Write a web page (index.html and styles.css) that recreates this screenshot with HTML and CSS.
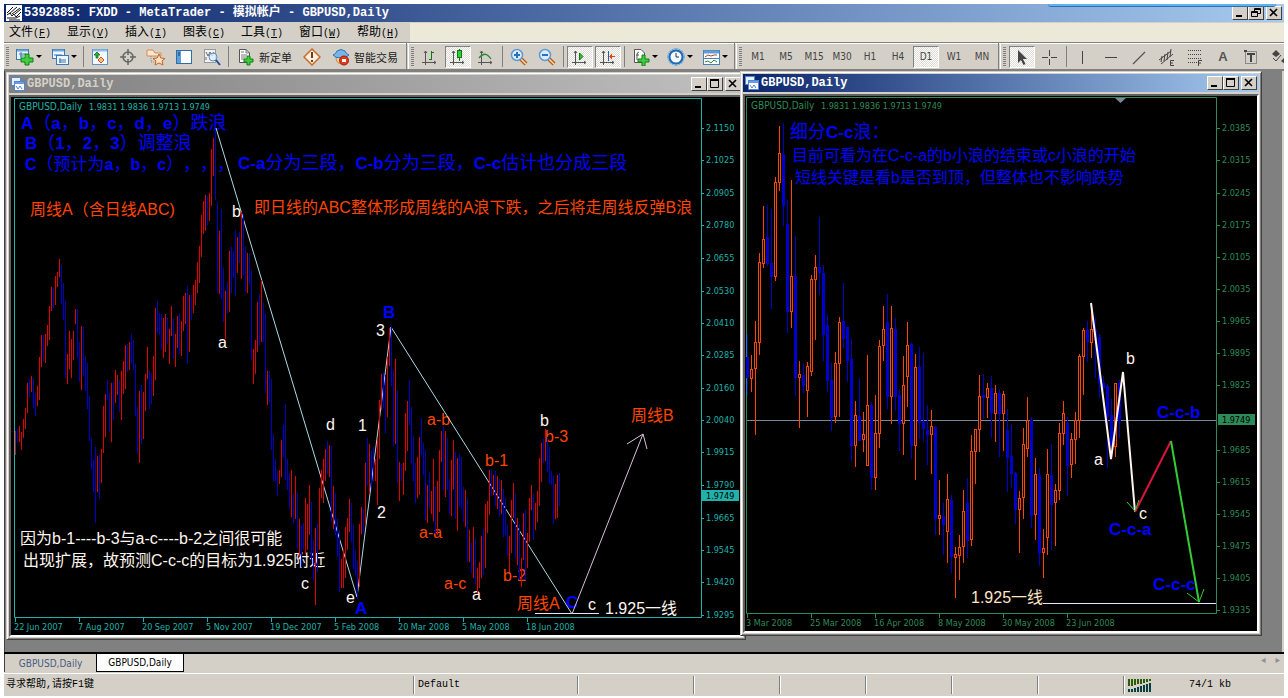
FILE: index.html
```html
<!DOCTYPE html>
<html lang="zh-CN">
  <head>
    <meta charset="UTF-8" />
    <meta name="viewport" content="width=device-width, initial-scale=1.0" />
    <title>5392885: FXDD - MetaTrader - GBPUSD,Daily</title>
    <link rel="stylesheet" href="styles.css">
  </head>

  <body>
    <div class="app">
      <header class="titlebar main-title">
        <svg class="logo" width="16" height="16" viewBox="0 0 16 16"><rect width="16" height="16" fill="#fff"/><path d="M1 8L7 2M3 9L11 2M6 9L14 3M9 9L15 4M1 10L4 8L6 11L8 9L10 12L15 7M1 13H10L14 11M3 15H14" stroke="#111" stroke-width="1" fill="none"/></svg>
        <h1>5392885: FXDD - MetaTrader - 模拟帐户 - GBPUSD,Daily</h1>
        <div class="dock"></div>
        <div class="win-buttons">
          <button aria-label="最小化"><svg width="12" height="10"><path d="M2 8H8" stroke="#000" stroke-width="2"/></svg></button>
          <button aria-label="还原"><svg width="12" height="10"><path d="M4.500 3V.5H10.500V5.500H8M4 1.500H11M1.500 3.500H7.500V8.500H1.500ZM1 4.500H8" stroke="#000" fill="none"/></svg></button>
          <button class="close" aria-label="关闭"><svg width="12" height="10"><path d="M2 1L9 8M9 1L2 8" stroke="#000" stroke-width="1.6"/></svg></button>
        </div>
      </header>

      <nav class="menubar">
        <div class="menus">
          <button>文件<span>(<u>F</u>)</span></button>
          <button>显示<span>(<u>V</u>)</span></button>
          <button>插入<span>(<u>I</u>)</span></button>
          <button>图表<span>(<u>C</u>)</span></button>
          <button>工具<span>(<u>T</u>)</span></button>
          <button>窗口<span>(<u>W</u>)</span></button>
          <button>帮助<span>(<u>H</u>)</span></button>
        </div>
      </nav>

      <div class="toolbar">
        <div class="group">
          <i class="grip"></i>
          <button class="drop" aria-label="新图表"><svg width="18" height="18"><rect x=".5" y="1.500" width="12" height="10" fill="#eef5fc" stroke="#3b78b5"/><path d="M1 2.500H12" stroke="#6ea5dc" stroke-width="2"/><path d="M3 6H10M4 8H8M5 4V10" stroke="#3b78b5"/><path d="M9 6H13V10H17V14H13V17H9V14H5V10H9Z" fill="#3fce3f" stroke="#108010"/></svg></button>
          <button class="drop" aria-label="配置文件"><svg width="18" height="18"><rect x="1.500" y="1.500" width="12" height="9" fill="#eef5fc" stroke="#3b78b5"/><path d="M2 2.500H13" stroke="#6ea5dc" stroke-width="2"/><rect x="5.500" y="7.500" width="12" height="9" fill="#eef5fc" stroke="#3b78b5"/><path d="M3 7H11M8 12H15M8 14H15M9 10V15" stroke="#3b78b5"/></svg></button>
          <i class="sep"></i>
          <button aria-label="市场报价"><svg width="18" height="18"><rect x="1.500" y="1.500" width="15" height="15" fill="#f4f9ff" stroke="#5a96cc"/><path d="M2 2.500H16" stroke="#8fbfec" stroke-width="2"/><path d="M3 7L6 4L9 7H7V10H5V7Z" fill="#2fae2f" stroke="#157015" stroke-width=".8"/><path d="M7 12L10 9L13 12L10 15Z" fill="#f6c08c" stroke="#d05010"/></svg></button>
          <button aria-label="数据窗口"><svg width="18" height="18"><circle cx="9" cy="9" r="5" fill="none" stroke="#666" stroke-width="1.600"/><path d="M9 1V7M9 11V17M1 9H7M11 9H17" stroke="#666" stroke-width="1.500"/></svg></button>
          <button aria-label="导航器"><svg width="20" height="18"><path d="M1 2H7L9 5H15V8H1Z" fill="#fbe5cf" stroke="#d48b5a"/><path d="M5 8V14H8" stroke="#888" stroke-dasharray="1 1" fill="none"/><path d="M13 6L14.800 10L19 10.500L16 13L17 17L13 15L9 17L10 13L7 10.500L11.200 10Z" fill="#fce3c2" stroke="#c96224"/></svg></button>
          <button aria-label="终端"><svg width="18" height="18"><rect x="1.500" y="2.500" width="15" height="13" fill="#fff" stroke="#2e6da6"/><rect x="2" y="3" width="4" height="12" fill="#5f9ed6"/><path d="M4 4V8" stroke="#113a66"/></svg></button>
          <button aria-label="策略测试"><svg width="18" height="18"><rect x="1.500" y="1.500" width="11" height="13" fill="#f2f2f2" stroke="#999"/><path d="M3 4L5 8L7 4L9 8L11 4M3 9V12" stroke="#667" fill="none"/><circle cx="10" cy="9" r="4" fill="#dbeefb" fill-opacity=".8" stroke="#5a8fc0"/><path d="M13 12L17 17" stroke="#1c4fa0" stroke-width="2"/></svg></button>
          <i class="sep"></i>
          <button class="wide"><svg width="18" height="18"><path d="M2.500 1.500H9L12.500 5V14.500H2.500Z" fill="#fff" stroke="#555"/><path d="M9 1V5H13M4 7H10M4 9H9M4 11H8M4 4H7" stroke="#777" fill="none"/><path d="M10 8H13V11H16V14H13V17H10V14H7V11H10Z" fill="#3fce3f" stroke="#108010"/></svg>新定单</button>
          <button aria-label="MetaEditor"><svg width="18" height="18"><path d="M9 1L17 9L9 17L1 9Z" fill="#fdeee0" stroke="#c56a2b" stroke-width="1.500"/><path d="M9 4V10M9 12V14" stroke="#7a3c12" stroke-width="2"/></svg></button>
          <button class="wide"><svg width="18" height="18"><path d="M4 9Q4 16 10 16L14 9Z" fill="#f5d4a0" stroke="#c9873c"/><path d="M1 7Q4 6 5 3Q9 0 13 3Q14 6 17 7Q15 10 9 10Q3 10 1 7Z" fill="#75b5ea" stroke="#3274b0"/><circle cx="12" cy="12.500" r="4.500" fill="#e23b1e" stroke="#a01c08"/><rect x="10" y="11" width="4" height="3" fill="#fff"/></svg>智能交易</button>
        </div>
        <div class="group">
          <i class="grip"></i>
          <button aria-label="柱状图"><svg width="18" height="18"><path d="M4.500 3V17M1 14.500H15M3 5L4.500 3L6 5M13 13L15 14.500L13 16" stroke="#555" fill="none"/><path d="M10.500 3V12M8 11.500H10.500M10.500 4.500H13" stroke="#0d7a12"/></svg></button>
          <button class="pressed" aria-label="阴阳烛"><svg width="18" height="18"><path d="M4.500 3V17M1 14.500H15M3 5L4.500 3L6 5M13 13L15 14.500L13 16" stroke="#555" fill="none"/><path d="M10.500 1V13" stroke="#0d7a12"/><rect x="8.500" y="2.500" width="4" height="7" fill="#30d030" stroke="#0d7a12"/></svg></button>
          <button aria-label="折线图"><svg width="18" height="18"><path d="M4.500 3V17M1 14.500H15M3 5L4.500 3L6 5M13 13L15 14.500L13 16" stroke="#555" fill="none"/><path d="M2 10Q8 2 14 11" stroke="#2c8a35" fill="none" stroke-width="1.300"/></svg></button>
          <i class="sep"></i>
          <button aria-label="放大"><svg width="18" height="18"><path d="M11 11L16 16" stroke="#b35a20" stroke-width="4"/><path d="M11 11L16 16" stroke="#ffd9a8" stroke-width="1.500"/><circle cx="7" cy="7" r="5.500" fill="#d9ecfb" stroke="#5f9ad6" stroke-width="1.500"/><path d="M4 7H10M7 4V10" stroke="#2f6fb4" stroke-width="2"/></svg></button>
          <button aria-label="缩小"><svg width="18" height="18"><path d="M11 11L16 16" stroke="#b35a20" stroke-width="4"/><path d="M11 11L16 16" stroke="#ffd9a8" stroke-width="1.500"/><circle cx="7" cy="7" r="5.500" fill="#d9ecfb" stroke="#5f9ad6" stroke-width="1.500"/><path d="M4 7H10" stroke="#2f6fb4" stroke-width="2"/></svg></button>
          <i class="sep"></i>
          <button class="pressed" aria-label="自动滚动"><svg width="18" height="18"><path d="M4.500 3V17M1 14.500H15M3 5L4.500 3L6 5M13 13L15 14.500L13 16" stroke="#555" fill="none"/><path d="M8.500 5L12 8.500L8.500 12Z" fill="#30c030" stroke="#0d7a12"/></svg></button>
          <button class="pressed" aria-label="图表平移"><svg width="18" height="18"><path d="M4.500 3V17M1 14.500H15M3 5L4.500 3L6 5M13 13L15 14.500L13 16" stroke="#555" fill="none"/><path d="M9.500 3V13" stroke="#2b5f93"/><path d="M10 8.500L13 5.500V8H16V9H13V11.500Z" fill="#d6451b"/></svg></button>
          <i class="sep"></i>
          <button class="drop" aria-label="技术指标"><svg width="18" height="18"><path d="M2.500 1.500H9L12.500 5V14.500H2.500Z" fill="#fff" stroke="#555"/><path d="M7 4Q5 4 5 7V12M4 7H7" stroke="#555" fill="none"/><path d="M10 7H13V11H17V14H13V18H10V14H6V11H10Z" fill="#3fce3f" stroke="#108010"/></svg></button>
          <button class="drop" aria-label="周期"><svg width="18" height="18"><circle cx="9" cy="9" r="7" fill="#f4f8fc" stroke="#2269b3" stroke-width="3"/><circle cx="9" cy="9" r="8" fill="none" stroke="#8bc4f0"/><path d="M9 5V9H12" stroke="#333" fill="none"/></svg></button>
          <button class="drop" aria-label="模板"><svg width="18" height="18"><rect x="1.500" y="2.500" width="16" height="14" fill="#fff" stroke="#4583bd"/><path d="M2 4H17" stroke="#5f9ed6" stroke-width="3"/><path d="M3 9L6 7L9 8L12 7L15 7" stroke="#a8482a" fill="none"/><path d="M2 10.500H17" stroke="#4583bd"/><path d="M3 14L6 13L9 15L12 12L15 14" stroke="#2d8a38" fill="none"/></svg></button>
        </div>
        <div class="group periods">
          <i class="grip"></i>
          <button>M1</button>
          <button>M5</button>
          <button>M15</button>
          <button>M30</button>
          <button>H1</button>
          <button>H4</button>
          <button class="pressed">D1</button>
          <button>W1</button>
          <button>MN</button>
        </div>
        <div class="group tools">
          <i class="grip"></i>
          <button class="pressed" aria-label="光标"><svg width="18" height="18"><path d="M5 2V15L8 12L10.500 17L12.500 16L10 11H14Z" fill="#444"/></svg></button>
          <button aria-label="十字准线"><svg width="18" height="18"><path d="M8.500 2V8M8.500 11V17M1 9.500H7M10 9.500H16" stroke="#444"/></svg></button>
          <i class="sep"></i>
          <button aria-label="垂直线"><svg width="18" height="18"><path d="M8.500 3V16" stroke="#444"/></svg></button>
          <button aria-label="水平线"><svg width="18" height="18"><path d="M3 9.500H15" stroke="#444"/></svg></button>
          <button aria-label="趋势线"><svg width="18" height="18"><path d="M3 16L15 4" stroke="#555" stroke-width="1.300"/></svg></button>
          <button aria-label="等距通道"><svg width="18" height="18"><path d="M1 12L13 3M3 16L15 6M4 8L3 14M7 6L6 13M10 4L9 12M13 1L12 9" stroke="#444"/><path d="M16 12.500H12.500V17.500H16M12.500 15H15" stroke="#444" fill="none"/></svg></button>
          <button aria-label="斐波纳契回调"><svg width="18" height="18"><path d="M2 2.500H16M2 6.500H16M2 10.500H16M2 14.500H11" stroke="#444" stroke-dasharray="1 1"/><path d="M16 12.500H12.500V18M12.500 15H15" stroke="#444" fill="none"/></svg></button>
          <button class="letter">A</button>
          <button aria-label="文字标签"><svg width="18" height="18"><rect x="3.500" y="3.500" width="11" height="12" fill="none" stroke="#444" stroke-dasharray="1 1"/><path d="M5 6H13M9 6V14" stroke="#444" stroke-width="2"/><rect x="2" y="2" width="3" height="2" fill="#444"/></svg></button>
          <button aria-label="箭头"><svg width="18" height="18"><path d="M2 6L6 2L10 6L6 9ZM11 13L15 9L18 12V15L15 16Z" fill="#444"/><path d="M3 10L6 13L11 7" stroke="#444" fill="none"/></svg></button>
        </div>
      </div>

      <main class="desktop">
        <section class="window win-left">
          <div class="titlebar inactive">
            <svg width="14" height="14"><rect x=".5" y=".5" width="9" height="8" fill="#e8f1fb" stroke="#4f86d8"/><rect x="3.500" y="4.500" width="10" height="9" fill="#fff" stroke="#4f86d8"/><path d="M4 6H13" stroke="#6b9be8" stroke-width="2"/><path d="M5 9L7 12L9 9L11 12" stroke="#4f86d8" fill="none"/></svg>
            <h2>GBPUSD,Daily</h2>
            <div class="win-buttons">
              <button aria-label="最小化"><svg width="12" height="10"><path d="M2 8H8" stroke="#000" stroke-width="2"/></svg></button>
              <button aria-label="最大化"><svg width="12" height="10"><path d="M1.500 1V8.500H9.500V1" stroke="#000" fill="none"/><path d="M1 1H10" stroke="#000" stroke-width="2"/></svg></button>
              <button class="close" aria-label="关闭"><svg width="12" height="10"><path d="M2 1L9 8M9 1L2 8" stroke="#000" stroke-width="1.6"/></svg></button>
            </div>
          </div>
          <svg class="chart weekly" id="chartLeft" viewBox="11 97 730 538">
            <path class="frame" d="M14.500 617.500V98.500H701.500V617.500Z"/>
            <text class="axis symbol" x="19" y="110">GBPUSD,Daily</text>
            <text class="axis" x="89" y="110">1.9831 1.9836 1.9713 1.9749</text>

            <g class="note blue big">
              <text x="21" y="129"><tspan>A</tspan>（<tspan>a</tspan>，<tspan>b</tspan>，<tspan>c</tspan>，<tspan>d</tspan>，<tspan>e</tspan>）跌浪</text>
              <text x="25" y="149"><tspan>B</tspan>（<tspan>1</tspan>，<tspan>2</tspan>，<tspan>3</tspan>）调整浪</text>
              <text class="narrow" x="25" y="170"><tspan>C</tspan>（预计为<tspan>a</tspan>，<tspan>b</tspan>，<tspan>c</tspan>），，，</text>
              <text x="238" y="169"><tspan>C-a</tspan>分为三段，<tspan>C-b</tspan>分为三段，<tspan>C-c</tspan>估计也分成三段</text>
              <text x="355" y="614"><tspan>A</tspan></text>
              <text x="383" y="318"><tspan>B</tspan></text>
              <text x="566" y="608"><tspan>C</tspan></text>
            </g>
            <g class="note orange">
              <text x="30" y="215">周线A（含日线ABC)</text>
              <text x="254" y="213">即日线的ABC整体形成周线的A浪下跌，之后将走周线反弹B浪</text>
              <text x="427" y="425">a-b</text>
              <text x="419" y="538">a-a</text>
              <text x="444" y="589">a-c</text>
              <text x="485" y="466">b-1</text>
              <text x="545" y="442">b-3</text>
              <text x="503" y="581">b-2</text>
              <text x="517" y="609">周线A</text>
              <text x="631" y="421">周线B</text>
            </g>
            <g class="note white">
              <text x="20" y="544">因为b-1----b-3与a-c----b-2之间很可能</text>
              <text x="23" y="566">出现扩展，故预测C-c-c的目标为1.925附近</text>
              <text x="232" y="217">b</text>
              <text x="218" y="348">a</text>
              <text x="326" y="430">d</text>
              <text x="301" y="589">c</text>
              <text x="346" y="603">e</text>
              <text x="358" y="431">1</text>
              <text x="376" y="336">3</text>
              <text x="377" y="518">2</text>
              <text x="472" y="600">a</text>
              <text x="540" y="426">b</text>
              <text x="588" y="610">c</text>
              <text x="605" y="614">1.925一线</text>
            </g>

            <path class="wave" d="M216 128L357 597L391 327L572 614"/>
            <path class="level" d="M535 613.500H599"/>
            <path class="forecast" d="M572 614L643 434M627 444L643 434L647 449"/>
            <g class="bars"></g>
            <g class="scale"></g>
          </svg>
        </section>

        <section class="window win-right">
          <div class="titlebar">
            <svg width="14" height="14"><rect x=".5" y=".5" width="9" height="8" fill="#e8f1fb" stroke="#4f86d8"/><rect x="3.500" y="4.500" width="10" height="9" fill="#fff" stroke="#4f86d8"/><path d="M4 6H13" stroke="#6b9be8" stroke-width="2"/><path d="M5 9L7 12L9 9L11 12" stroke="#4f86d8" fill="none"/></svg>
            <h2>GBPUSD,Daily</h2>
            <div class="win-buttons">
              <button aria-label="最小化"><svg width="12" height="10"><path d="M2 8H8" stroke="#000" stroke-width="2"/></svg></button>
              <button aria-label="最大化"><svg width="12" height="10"><path d="M1.500 1V8.500H9.500V1" stroke="#000" fill="none"/><path d="M1 1H10" stroke="#000" stroke-width="2"/></svg></button>
              <button class="close" aria-label="关闭"><svg width="12" height="10"><path d="M2 1L9 8M9 1L2 8" stroke="#000" stroke-width="1.6"/></svg></button>
            </div>
          </div>
          <svg class="chart daily" id="chartRight" viewBox="745 96 512 535">
            <path class="frame" d="M746.500 613.500V97.500H1216.500V613.500Z"/>
            <path d="M1115 98H1126L1120.500 103Z" fill="#778899"/>
            <text class="axis symbol" x="751" y="109">GBPUSD,Daily</text>
            <text class="axis" x="821" y="109">1.9831 1.9836 1.9713 1.9749</text>
            <path class="price" d="M747 420.500H1216"/>
            <path class="level" d="M1043 603.500H1216"/>
            <g class="bars"></g>

            <g class="note blue big">
              <text x="790" y="138">细分<tspan>C-c</tspan>浪：</text>
              <text x="1157" y="418"><tspan>C-c-b</tspan></text>
              <text x="1109" y="535"><tspan>C-c-a</tspan></text>
              <text x="1153" y="590"><tspan>C-c-c</tspan></text>
            </g>
            <g class="note blue">
              <text x="792" y="161">目前可看为在C-c-a的b小浪的结束或c小浪的开始</text>
              <text x="795" y="183">短线关键是看b是否到顶，但整体也不影响跌势</text>
            </g>
            <g class="note white">
              <text x="1126" y="364">b</text>
              <text x="1094" y="465">a</text>
              <text x="1139" y="519">c</text>
              <text class="bisque" x="971" y="603">1.925一线</text>
            </g>

            <g class="swing">
              <path stroke="#fff5ee" d="M1091 303L1111 459L1123 372L1135 512"/>
              <path stroke="#dc143c" d="M1135 512L1171 441"/>
              <path stroke="#32cd32" d="M1171 441L1199 602"/>
              <path class="head" d="M1127 502L1135 511L1139 500M1187 593L1199 602L1204 589"/>
            </g>
            <g class="scale"></g>
          </svg>
        </section>
      </main>

      <div class="tabs">
        <button>GBPUSD,Daily</button>
        <button class="active">GBPUSD,Daily</button>
        <span class="arrows"><i>◂</i><i>▸</i></span>
      </div>

      <footer class="status">
        <span class="help">寻求帮助,请按F1键</span>
        <span class="profile">Default</span>
        <span class="bar-time"></span>
        <span></span>
        <span></span>
        <span></span>
        <span></span>
        <span></span>
        <span class="traffic">
          <svg width="24" height="13"><path d="M1 0V7M4 0V7M7 0V6M10 0V5M13 0V5M16 0V4M19 0V3M22 0V2" stroke="#2a5c00" stroke-width="2"/><path d="M1 10V13M4 10V13M7 9V13M10 8V13M13 7V13M16 6V13M19 5V13M22 4V13" stroke="#004040" stroke-width="2"/></svg>
          74/1 kb
        </span>
      </footer>
    </div>
    <script src="chart.js"></script>
  </body>
</html>
```
FILE: styles.css
```css
* {
  box-sizing: border-box;
}

body {
  margin: 0;
  background-color: #fff;
  font-family: "Liberation Sans", "Noto Sans CJK SC", sans-serif;
  font-size: 12px;
}

h1,
h2 {
  margin: 0;
  font-size: 12px;
}

button {
  border: none;
  padding: 0;
  margin: 0;
  background: none;
  font: inherit;
  color: inherit;
}

svg {
  flex: none;
}

.app {
  display: flex;
  flex-direction: column;
  height: 100vh;
  padding: 4px 4px 0;
}

/* title bars */
.titlebar {
  position: relative;
  display: flex;
  align-items: center;
  gap: 2px;
  height: 18px;
  padding: 0 2px;
  background: linear-gradient(to right, #0a246a, #a6caf0);
  color: #fff;
  font-family: "Liberation Mono", "Noto Sans CJK SC", monospace;
  line-height: 18px;
  white-space: nowrap;
}

.titlebar h1,
.titlebar h2 {
  flex: 1;
}

.inactive {
  background: linear-gradient(to right, #808080, #c0c0c0);
  color: #d4d0c8;
}

.dock {
  position: absolute;
  top: 0;
  right: 8px;
  width: 228px;
  height: 3px;
  background-color: #5db4f0;
  border-bottom: 1px solid #2f6fae;
  border-radius: 0 0 3px 3px;
}

.win-buttons {
  display: flex;
}

.win-buttons button {
  display: flex;
  align-items: center;
  justify-content: center;
  width: 16px;
  height: 14px;
  background-color: #d4d0c8;
  border: 1px solid;
  border-color: #fff #404040 #404040 #fff;
}

.win-buttons .close {
  margin-left: 2px;
}

/* menu */
.menubar {
  flex: none;
  height: 20px;
  background-color: #ece9d8;
  border-top: 1px solid #d4d0c8;
}

.menus {
  display: flex;
  width: 406px;
  height: 19px;
  background-color: #d4d0c8;
}

.menus button {
  width: 58px;
  padding-left: 5px;
  text-align: left;
  line-height: 18px;
  white-space: nowrap;
}

.menus span {
  font-family: "Liberation Mono", monospace;
  font-size: 10px;
}

/* toolbar */
.toolbar {
  flex: none;
  display: flex;
  height: 29px;
  border-top: 1px solid #808080;
  border-bottom: 2px solid #808080;
  background-color: #d4d0c8;
  box-shadow: inset 0 1px #fff;
  overflow: hidden;
}

.group {
  flex: none;
  display: flex;
  align-items: center;
  padding: 1px 2px 0;
  border-right: 1px solid #808080;
}

.group + .group {
  margin-left: 1px;
  border-left: 1px solid #fff;
}

.group:last-child {
  border-right: none;
}

.group button {
  display: flex;
  align-items: center;
  justify-content: center;
  width: 28px;
  height: 22px;
}

.group .drop {
  width: 35px;
  gap: 2px;
}

.drop::after {
  content: "";
  border: 3px solid transparent;
  border-top-color: #000;
  border-bottom: none;
}

.group .wide {
  width: auto;
  gap: 4px;
  padding: 0 6px;
  font-size: 11px;
  color: #222;
}

.group .pressed {
  width: 26px;
  margin: 0 1px;
  background: repeating-conic-gradient(#fff 0 25%, #dedbd4 0 50%) 0 0 / 2px 2px;
  border: 1px solid;
  border-color: #808080 #fff #fff #808080;
}

.grip {
  width: 3px;
  height: 19px;
  margin-right: 2px;
  background: repeating-linear-gradient(#808080 0 1px, #d4d0c8 1px 2px);
}

.sep {
  width: 1px;
  height: 21px;
  margin: 0 2px;
  background-color: #808080;
}

.periods,
.tabs {
  font-family: "DejaVu Sans Condensed", "DejaVu Sans", sans-serif;
  font-size: 10px;
  color: #444;
}

.tools .letter {
  font-size: 13px;
  font-weight: 700;
  color: #555;
}

/* chart windows */
.desktop {
  position: relative;
  flex: 1;
  min-height: 0;
  overflow: hidden;
  background-color: #808080;
  border-left: 1px solid #404040;
  border-right: 2px solid #d4d0c8;
}

.window {
  position: absolute;
  padding: 2px;
  background-color: #d4d0c8;
  border: 1px solid;
  border-color: #d4d0c8 #404040 #404040 #d4d0c8;
  box-shadow: inset 1px 1px #fff, inset -1px -1px #808080;
}

.win-left {
  left: 1px;
  top: 1px;
  width: 740px;
}

.win-right {
  left: 735px;
  top: 0;
  width: 522px;
}

.chart {
  display: block;
  width: 100%;
  margin-top: 2px;
  background-color: #000;
  border: 2px solid;
  border-color: #606060 #fff #fff #606060;
}

.weekly {
  --axis: #20b2aa;
}

.daily {
  --axis: #2e8b57;
}

.frame,
.tick {
  fill: none;
  stroke: var(--axis);
}

.axis {
  fill: var(--axis);
  font-family: "DejaVu Sans Condensed", "DejaVu Sans", sans-serif;
  font-size: 9px;
}

.symbol {
  font-size: 10px;
}

.tag {
  fill: var(--axis);
}

.tag-text {
  fill: #000;
}

.note {
  font-size: 16px;
  text-spacing-trim: space-all;
}

.big {
  font-size: 18px;
}

.big .narrow {
  font-size: 17px;
}

.big tspan {
  font-weight: 700;
  font-size: 17px;
}

.big .narrow tspan {
  font-size: 16px;
}

.blue {
  fill: #0000ff;
}

.orange {
  fill: #ff4500;
}

.white {
  fill: #fff5ee;
}

.bisque {
  fill: #ffe4c4;
}

.wave,
.forecast,
.level,
.price {
  fill: none;
  stroke: #add8e6;
}

.forecast {
  stroke: #d8bfd8;
}

.level {
  stroke: #e6e6fa;
}

.price {
  stroke: #778899;
}

.swing path {
  fill: none;
  stroke-width: 2;
}

.swing .head {
  stroke: #32cd32;
  stroke-width: 1;
}

.bars {
  shape-rendering: crispEdges;
}

.up {
  fill: #e00000;
}

.down {
  fill: #0000cd;
}

.daily .up {
  fill: #ff4500;
}

.daily .hole {
  fill: #000;
}

/* tabs and status bar */
.tabs {
  flex: none;
  display: flex;
  height: 21px;
  border-top: 2px solid #000;
  background-color: #d4d0c8;
}

.tabs button {
  width: 92px;
  height: 18px;
  border-left: 1px solid #404040;
  color: #4a5a80;
  line-height: 15px;
}

.tabs .active {
  width: 88px;
  background-color: #fff;
  border: 1px solid #000;
  border-top: none;
  color: #000;
}

.arrows {
  margin-left: auto;
  padding-right: 4px;
  color: #909090;
}

.arrows i {
  margin-left: 10px;
  font-style: normal;
}

.status {
  flex: none;
  display: flex;
  align-items: center;
  height: 25px;
  padding: 2px 0;
  background-color: #d4d0c8;
  border-top: 1px solid #fff;
  border-bottom: 2px solid #fff;
  font-family: "Liberation Mono", "Noto Sans CJK SC", monospace;
  font-size: 10px;
}

.status span {
  width: 86px;
  height: 18px;
  padding-left: 4px;
  border-left: 1px solid #808080;
  box-shadow: inset 1px 0 #fff;
  line-height: 18px;
  white-space: nowrap;
}

.status .help {
  flex: 1;
  padding-left: 2px;
  border-left: none;
  box-shadow: none;
}

.status .profile {
  width: 164px;
}

.status .bar-time {
  width: 116px;
}

.status .traffic {
  display: flex;
  align-items: center;
  gap: 37px;
  width: 161px;
}
```
FILE: chart.js
```js
const NS = "http://www.w3.org/2000/svg";

// high, low, 1 = up
const weekly = [
  [431,455,1],[429,443,0],[426,442,1],[432,450,1],[419,438,1],[408,429,1],[383,413,1],[379,397,0],[376,392,1],[378,408,0],
  [393,416,0],[386,406,1],[357,400,1],[335,367,1],[335,361,0],[334,363,1],[325,346,1],[306,340,1],[287,311,1],[288,308,0],
  [276,305,1],[272,287,1],[259,277,1],[265,304,0],[283,320,0],[301,378,0],[354,384,1],[331,369,1],[339,378,1],[331,360,1],
  [309,324,1],[309,358,0],[342,382,0],[326,390,1],[327,376,0],[356,391,0],[363,409,0],[396,441,0],[438,469,0],[460,492,0],
  [447,523,0],[456,492,1],[455,499,0],[449,483,1],[406,453,1],[394,437,1],[380,400,0],[393,432,0],[383,442,1],[382,420,0],
  [370,403,1],[375,395,1],[380,412,0],[371,420,1],[361,394,1],[345,389,1],[344,372,0],[342,370,1],[334,363,0],[340,370,0],
  [364,416,0],[407,454,0],[391,463,1],[385,444,0],[392,439,1],[374,411,1],[347,379,1],[371,409,0],[373,404,0],[356,396,1],
  [308,380,1],[301,333,0],[313,335,0],[314,350,0],[318,358,1],[314,352,1],[318,344,0],[329,364,1],[306,336,1],[319,359,0],
  [334,367,1],[316,348,1],[314,354,0],[321,356,1],[296,331,1],[293,324,1],[286,364,0],[295,352,1],[295,320,0],[285,313,1],
  [280,305,1],[262,293,1],[246,283,1],[215,257,1],[201,234,1],[195,231,1],[196,226,0],[193,221,1],[149,206,1],[138,176,1],
  [129,200,0],[202,293,0],[231,294,1],[209,299,0],[268,322,0],[291,339,1],[282,313,0],[251,312,1],[247,293,0],[251,278,0],
  [230,296,0],[237,273,1],[232,263,0],[212,279,1],[214,275,0],[247,292,0],[253,293,1],[254,284,0],[270,360,0],[349,384,1],
  [340,374,1],[302,352,1],[294,345,0],[280,342,1],[303,342,0],[313,393,0],[371,405,1],[371,402,0],[379,450,0],[434,481,0],
  [459,481,0],[471,496,0],[470,484,1],[440,477,1],[425,457,0],[404,480,0],[459,490,0],[473,509,0],[470,517,1],[494,523,0],
  [476,519,1],[493,549,0],[519,557,1],[526,567,0],[523,550,0],[498,554,1],[504,550,1],[485,535,1],[502,560,0],[540,581,0],
  [528,605,1],[524,572,0],[488,550,1],[470,498,1],[459,503,1],[449,481,1],[441,474,0],[445,477,1],[446,522,0],[486,529,1],
  [493,535,0],[519,557,0],[530,592,0],[559,588,1],[550,588,1],[527,578,1],[518,550,1],[499,532,1],[503,542,0],[525,569,0],
  [550,575,0],[561,599,0],[524,587,1],[507,534,1],[509,532,0],[463,525,1],[438,486,0],[444,494,1],[451,490,0],[447,482,0],
  [459,481,1],[439,505,1],[400,459,1],[374,410,1],[373,408,0],[375,433,0],[357,417,1],[328,366,1],[326,386,0],[370,446,0],
  [359,444,1],[391,483,0],[462,501,1],[464,481,0],[463,495,1],[413,471,1],[401,451,1],[380,425,0],[407,463,0],[436,481,0],
  [463,503,0],[457,498,1],[437,495,1],[418,455,0],[443,475,0],[450,520,0],[485,523,1],[472,509,0],[491,514,1],[459,521,1],
  [486,534,0],[481,535,1],[450,512,1],[431,462,1],[426,490,0],[431,497,1],[438,490,0],[479,514,0],[460,516,1],[440,489,1],
  [452,519,0],[458,531,1],[454,507,0],[457,509,0],[487,522,0],[490,527,1],[499,562,0],[530,562,1],[543,573,0],[527,578,1],
  [539,584,0],[568,594,1],[562,588,1],[536,578,1],[529,575,0],[504,568,1],[501,533,1],[470,515,1],[470,496,0],[475,495,1],
  [471,506,0],[476,509,1],[479,517,0],[480,514,1],[489,537,0],[498,535,0],[525,556,0],[536,572,1],[500,553,1],[483,518,1],
  [494,558,0],[518,565,1],[524,580,0],[558,587,1],[513,560,1],[510,580,0],[533,568,1],[498,542,1],[485,510,1],[494,540,0],
  [503,530,1],[491,522,1],[458,506,1],[443,482,1],[439,463,0],[429,461,1],[437,472,0],[447,484,0],[471,485,0],[476,524,0],
  [484,519,1],[475,518,1],[473,506,0],
];

// high, low, body top, body bottom, 1 = up
const daily = [
  [334,395,357,378,0],[355,392,369,379,1],[321,435,342,369,1],[253,355,262,343,1],[206,268,239,264,1],[205,266,237,264,0],
  [209,309,263,277,0],[177,281,182,277,1],[126,191,153,183,1],[123,226,154,206,0],[200,333,224,312,0],[180,328,276,312,1],
  [236,396,276,378,0],[361,428,374,378,1],[364,393,375,386,0],[362,417,366,391,1],[275,376,279,372,1],[255,340,267,280,1],
  [217,295,267,273,0],[265,361,273,335,0],[315,392,325,381,0],[363,431,380,418,0],[352,423,363,417,1],[317,417,322,364,1],
  [283,348,321,339,0],[327,382,327,361,0],[339,461,359,446,0],[401,467,415,446,1],[378,441,416,441,0],[412,452,434,440,1],
  [355,466,405,466,1],[402,490,405,478,0],[395,490,433,478,1],[340,448,346,434,1],[306,361,329,346,1],[294,409,322,397,0],
  [306,424,328,397,1],[318,411,329,397,0],[390,451,395,424,0],[356,455,385,424,1],[322,407,345,377,1],[343,459,344,446,0],
  [354,480,367,446,1],[347,439,367,423,0],[353,442,422,429,0],[405,465,430,435,0],[410,474,426,435,1],[426,535,427,519,0],
  [480,535,515,519,1],[503,555,516,525,0],[474,563,499,532,1],[495,573,500,557,0],[547,598,554,558,1],[535,580,547,556,1],
  [490,563,511,547,1],[478,558,503,541,0],[435,546,451,540,1],[429,484,429,452,1],[375,452,396,430,1],[374,419,395,398,0],
  [383,418,388,398,1],[376,438,388,413,0],[385,442,393,414,1],[389,457,393,414,0],[391,451,394,414,1],[409,492,430,458,0],
  [424,488,456,474,0],[472,524,473,510,0],[491,553,498,510,1],[428,519,444,498,1],[397,457,420,449,1],[417,528,420,516,0],
  [458,540,474,515,1],[468,566,475,553,0],[529,578,548,553,1],[449,555,474,538,1],[444,550,475,505,0],[484,546,490,503,1],
  [423,500,433,491,1],[401,445,413,434,1],[417,496,423,466,0],[433,478,439,465,1],[412,464,420,440,1],[354,438,356,421,1],
  [328,395,330,357,1],[321,362,330,342,0],[307,358,329,343,1],[318,378,330,340,0],[334,398,337,383,0],[376,390,383,388,0],
  [384,468,386,417,0],[399,446,415,445,0],[383,457,383,447,1],[380,438,383,421,0],
];

function add(parent, tag, attrs, text) {
  const el = document.createElementNS(NS, tag);
  for (const key in attrs) el.setAttribute(key, attrs[key]);
  if (text) el.textContent = text;
  parent.appendChild(el);
}

function drawScale(svg, x, bottom, prices, dates, tagY) {
  const scale = svg.querySelector(".scale");
  prices.forEach(([y, label]) => {
    add(scale, "path", { class: "tick", d: `M${x} ${y + 0.5}h3` });
    add(scale, "text", { class: "axis", x: x + 5, y: y + 3 }, label);
  });
  dates.forEach(([dx, label]) => {
    add(scale, "path", { class: "tick", d: `M${dx + 1.5} ${bottom}v4` });
    add(scale, "text", { class: "axis", x: dx, y: bottom + 12 }, label);
  });
  // current price
  add(scale, "rect", { class: "tag", x: x + 1, y: tagY - 6, width: 37, height: 11 });
  add(scale, "text", { class: "axis tag-text", x: x + 5, y: tagY + 3 }, "1.9749");
}

const left = document.getElementById("chartLeft");
const leftBars = left.querySelector(".bars");
weekly.forEach(([high, low, up], i) => {
  add(leftBars, "rect", { class: up ? "up" : "down", x: 15 + i * 2, y: high, width: 1, height: low - high });
});
drawScale(left, 701, 618,
  [[128, "2.1150"], [160, "2.1025"], [193, "2.0905"], [225, "2.0780"], [258, "2.0655"], [291, "2.0530"],
   [323, "2.0410"], [355, "2.0285"], [388, "2.0160"], [420, "2.0040"], [452, "1.9915"], [485, "1.9790"],
   [518, "1.9665"], [550, "1.9545"], [582, "1.9420"], [615, "1.9295"]],
  [[14, "22 Jun 2007"], [78, "7 Aug 2007"], [142, "20 Sep 2007"], [206, "5 Nov 2007"], [270, "19 Dec 2007"],
   [334, "5 Feb 2008"], [398, "20 Mar 2008"], [462, "5 May 2008"], [526, "18 Jun 2008"]],
  496);

const right = document.getElementById("chartRight");
const rightBars = right.querySelector(".bars");
daily.forEach(([high, low, top, bottom, up], i) => {
  const x = 747 + i * 4;
  const color = up ? "up" : "down";
  add(rightBars, "rect", { class: color, x: x, y: high, width: 1, height: low - high });
  add(rightBars, "rect", { class: color, x: x - 1, y: top, width: 3, height: bottom - top });
  if (up) {
    add(rightBars, "rect", { class: "hole", x: x, y: top + 1, width: 1, height: bottom - top - 2 });
  }
});
drawScale(right, 1217, 614,
  [[128, "2.0385"], [160, "2.0315"], [193, "2.0245"], [225, "2.0175"], [257, "2.0105"], [289, "2.0035"],
   [321, "1.9965"], [353, "1.9895"], [385, "1.9825"], [450, "1.9685"], [482, "1.9615"], [514, "1.9545"],
   [546, "1.9475"], [578, "1.9405"], [610, "1.9335"]],
  [[746, "3 Mar 2008"], [810, "25 Mar 2008"], [874, "16 Apr 2008"], [938, "8 May 2008"], [1002, "30 May 2008"],
   [1066, "23 Jun 2008"]],
  420);
```
